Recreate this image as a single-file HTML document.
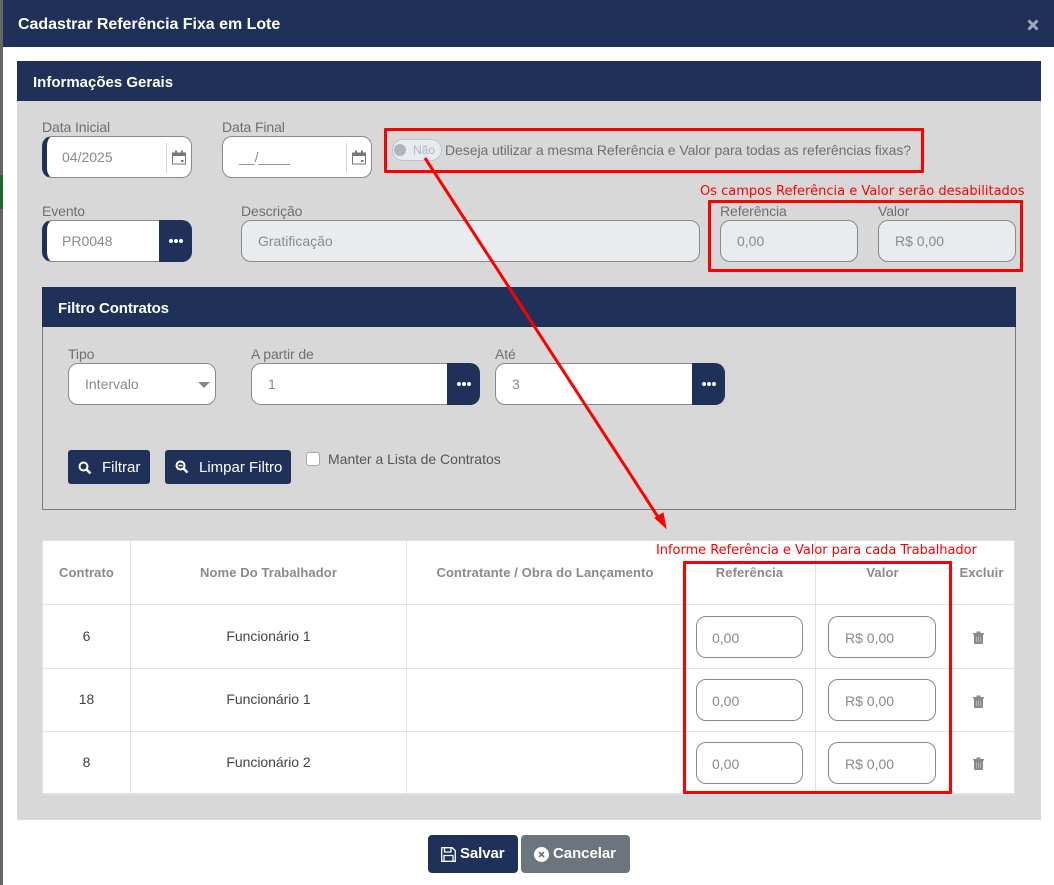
<!DOCTYPE html>
<html lang="pt-BR"><head><meta charset="utf-8"><title>Cadastrar Referência Fixa em Lote</title>
<style>
html,body{margin:0;padding:0;width:1054px;height:885px;overflow:hidden;background:#fff;font-family:"Liberation Sans",Arial,sans-serif}
.a{position:absolute;box-sizing:border-box;white-space:nowrap}
.lb{font-size:14px;line-height:16px;color:#6f6f6f;letter-spacing:-.1px}
.in{height:42px;border:1px solid #8a8a8a;border-radius:10px;background:#fff;font-size:14px;color:#8a8a8a;line-height:40px;padding-left:16px}
.ti{line-height:42px;padding-left:15px}
.dis{background:#e9ecef}
.lbar{border-left:5px solid #1f3158;padding-left:15px}
.dots{background:#1f3158;height:42px;border-radius:0 10px 10px 0}
.dots i{position:absolute;top:19px;width:4px;height:4px;border-radius:50%;background:#fff}
.bar{background:#1f3158;color:#fff;font-weight:bold}
.btn{background:#1f3158;color:#fff;border-radius:3px;font-size:14px}
.th{font-size:13px;font-weight:bold;color:#8a8a8a;text-align:center;line-height:16px;letter-spacing:.1px}
.td{font-size:14px;color:#444;text-align:center;line-height:16px;letter-spacing:-.05px}
.red{font-family:"DejaVu Sans",sans-serif;color:#f00;font-size:13px;line-height:14px}
.rb{border:3px solid #f00;border-radius:1px}
</style></head><body>
<!-- background behind modal -->
<div class="a" style="left:0;top:0;width:3px;height:885px;background:#666"></div>
<div class="a" style="left:0;top:175px;width:3px;height:34px;background:#1c6b2a"></div>

<!-- modal header -->
<div class="a bar" style="left:3px;top:0;width:1051px;height:47px"></div>
<div class="a" style="left:18px;top:15px;font-size:16px;font-weight:bold;line-height:20px;color:#fff;letter-spacing:-.03px">Cadastrar Referência Fixa em Lote</div>
<svg class="a" style="left:1027px;top:19px" width="12" height="12" viewBox="0 0 12 12"><path d="M1.5 1.5L10.5 10.5M10.5 1.5L1.5 10.5" stroke="#a2a8b4" stroke-width="3"/></svg>

<!-- main panel -->
<div class="a" style="left:17px;top:101px;width:1024px;height:719px;background:#d8d8d8"></div>
<div class="a bar" style="left:17px;top:61px;width:1024px;height:40px"></div>
<div class="a" style="left:33px;top:74px;font-size:15px;font-weight:bold;line-height:18px;color:#fff">Informações Gerais</div>

<!-- date fields -->
<div class="a lb" style="left:42px;top:119px">Data Inicial</div>
<div class="a in lbar" style="left:42px;top:136px;width:150px">04/2025</div>
<div class="a" style="left:166px;top:143px;width:1px;height:30px;background:#cfd3da"></div>
<svg class="a" style="left:172px;top:150px" width="14" height="15" viewBox="0 0 14 15"><path d="M.5 3h13v11H.5z" fill="#fff" stroke="#777"/><path d="M0 2.500h14V6H0z" fill="#777"/><path d="M3 .5h2v3H3zM9 .5h2v3H9z" fill="#777"/><path d="M9 10h2.500v2H9z" fill="#777"/></svg>

<div class="a lb" style="left:222px;top:119px">Data Final</div>
<div class="a in" style="left:222px;top:136px;width:150px;padding-left:16px">__/____</div>
<div class="a" style="left:346px;top:143px;width:1px;height:30px;background:#cfd3da"></div>
<svg class="a" style="left:352px;top:150px" width="14" height="15" viewBox="0 0 14 15"><path d="M.5 3h13v11H.5z" fill="#fff" stroke="#777"/><path d="M0 2.500h14V6H0z" fill="#777"/><path d="M3 .5h2v3H3zM9 .5h2v3H9z" fill="#777"/><path d="M9 10h2.500v2H9z" fill="#777"/></svg>

<!-- toggle -->
<div class="a" style="left:392px;top:139px;width:50px;height:22px;border:1px solid #bfc4cc;border-radius:11px;background:#e9ecef"></div>
<div class="a" style="left:394px;top:144px;width:12px;height:12px;border-radius:50%;background:#adb5bd"></div>
<div class="a" style="left:413px;top:142px;font-size:12px;line-height:16px;color:#adb5bd">Não</div>
<div class="a lb" style="left:445px;top:142px;letter-spacing:-.06px">Deseja utilizar a mesma Referência e Valor para todas as referências fixas?</div>

<!-- evento row -->
<div class="a lb" style="left:42px;top:203px">Evento</div>
<div class="a in lbar" style="left:42px;top:220px;width:118px;border-radius:10px 0 0 10px">PR0048</div>
<div class="a dots" style="left:159px;top:220px;width:33px"><i style="left:10px"></i><i style="left:15px"></i><i style="left:20px"></i></div>

<div class="a lb" style="left:241px;top:203px">Descrição</div>
<div class="a in dis" style="left:241px;top:220px;width:459px">Gratificação</div>

<div class="a lb" style="left:720px;top:203px">Referência</div>
<div class="a in dis" style="left:720px;top:220px;width:138px">0,00</div>
<div class="a lb" style="left:878px;top:203px">Valor</div>
<div class="a in dis" style="left:878px;top:220px;width:138px">R$ 0,00</div>

<!-- filter -->
<div class="a bar" style="left:42px;top:287px;width:974px;height:40px"></div>
<div class="a" style="left:58px;top:300px;font-size:15px;font-weight:bold;line-height:17px;color:#fff;letter-spacing:-.1px">Filtro Contratos</div>
<div class="a" style="left:42px;top:327px;width:974px;height:183px;border:1px solid #7c7c7c;border-top:0"></div>

<div class="a lb" style="left:68px;top:346px">Tipo</div>
<div class="a in" style="left:68px;top:363px;width:148px">Intervalo</div>
<div class="a" style="left:198px;top:382px;width:0;height:0;border-left:6px solid transparent;border-right:6px solid transparent;border-top:6px solid #888"></div>

<div class="a lb" style="left:251px;top:346px">A partir de</div>
<div class="a in" style="left:251px;top:363px;width:197px;border-radius:10px 0 0 10px">1</div>
<div class="a dots" style="left:447px;top:363px;width:33px"><i style="left:10px"></i><i style="left:15px"></i><i style="left:20px"></i></div>

<div class="a lb" style="left:495px;top:346px">Até</div>
<div class="a in" style="left:495px;top:363px;width:198px;border-radius:10px 0 0 10px">3</div>
<div class="a dots" style="left:692px;top:363px;width:33px"><i style="left:10px"></i><i style="left:15px"></i><i style="left:20px"></i></div>

<div class="a btn" style="left:68px;top:450px;width:82px;height:34px"></div>
<svg class="a" style="left:78px;top:461px" width="14" height="14" viewBox="0 0 14 14"><circle cx="5.500" cy="5.500" r="4" fill="none" stroke="#fff" stroke-width="2"/><path d="M8.500 8.500L12.500 12.500" stroke="#fff" stroke-width="2.500"/></svg>
<div class="a" style="left:102px;top:459px;font-size:15px;line-height:17px;color:#fff">Filtrar</div>
<div class="a btn" style="left:165px;top:450px;width:126px;height:34px"></div>
<svg class="a" style="left:175px;top:460px" width="14" height="14" viewBox="0 0 14 14"><circle cx="5.500" cy="5.500" r="4" fill="none" stroke="#fff" stroke-width="2"/><path d="M8.500 8.500L12.500 12.500" stroke="#fff" stroke-width="2.500"/><path d="M3.500 5.500h4" stroke="#fff" stroke-width="1.500"/></svg>
<div class="a" style="left:199px;top:459px;font-size:15px;line-height:17px;color:#fff">Limpar Filtro</div>
<div class="a" style="left:306px;top:452px;width:14px;height:14px;background:#fff;border:1px solid #aaa;border-radius:3px"></div>
<div class="a" style="left:328px;top:451px;font-size:14px;line-height:16px;color:#555">Manter a Lista de Contratos</div>

<!-- table -->
<div class="a" style="left:42px;top:540px;width:973px;height:255px;background:#fff;border:1px solid #dee2e6;border-width:1px 1px 2px 1px"></div>
<div class="a" style="left:43px;top:604px;width:971px;height:1px;background:#dee2e6"></div>
<div class="a" style="left:43px;top:668px;width:971px;height:1px;background:#dee2e6"></div>
<div class="a" style="left:43px;top:731px;width:971px;height:1px;background:#dee2e6"></div>
<div class="a" style="left:130px;top:541px;width:1px;height:253px;background:#dee2e6"></div>
<div class="a" style="left:406px;top:541px;width:1px;height:253px;background:#dee2e6"></div>
<div class="a" style="left:815px;top:541px;width:1px;height:253px;background:#dee2e6"></div>

<div class="a th" style="left:43px;top:565px;width:87px">Contrato</div>
<div class="a th" style="left:131px;top:565px;width:275px">Nome Do Trabalhador</div>
<div class="a th" style="left:407px;top:565px;width:276px">Contratante / Obra do Lançamento</div>
<div class="a th" style="left:684px;top:565px;width:131px">Referência</div>
<div class="a th" style="left:816px;top:565px;width:133px">Valor</div>
<div class="a th" style="left:950px;top:565px;width:63px">Excluir</div>

<div class="a td" style="left:43px;top:628px;width:87px">6</div>
<div class="a td" style="left:131px;top:628px;width:275px">Funcionário 1</div>
<div class="a td" style="left:43px;top:691px;width:87px">18</div>
<div class="a td" style="left:131px;top:691px;width:275px">Funcionário 1</div>
<div class="a td" style="left:43px;top:754px;width:87px">8</div>
<div class="a td" style="left:131px;top:754px;width:275px">Funcionário 2</div>

<div class="a in ti" style="left:696px;top:616px;width:107px">0,00</div>
<div class="a in ti" style="left:828px;top:616px;width:108px;padding-left:16px">R$ 0,00</div>
<div class="a in ti" style="left:696px;top:679px;width:107px">0,00</div>
<div class="a in ti" style="left:828px;top:679px;width:108px;padding-left:16px">R$ 0,00</div>
<div class="a in ti" style="left:696px;top:742px;width:107px">0,00</div>
<div class="a in ti" style="left:828px;top:742px;width:108px;padding-left:16px">R$ 0,00</div>

<svg class="a" style="left:973px;top:631px" width="11" height="13" viewBox="0 0 11 13"><path d="M0 2h11v1.500H0zM3.500 .5h4V2h-4z" fill="#8a8a8a"/><path d="M1 3h9v9a1 1 0 0 1-1 1H2a1 1 0 0 1-1-1z" fill="#8a8a8a"/><path d="M3.500 5.500v5.500M5.500 5.500v5.500M7.500 5.500v5.500" stroke="#c4c4c4" stroke-width=".7"/></svg>
<svg class="a" style="left:973px;top:695px" width="11" height="13" viewBox="0 0 11 13"><path d="M0 2h11v1.500H0zM3.500 .5h4V2h-4z" fill="#8a8a8a"/><path d="M1 3h9v9a1 1 0 0 1-1 1H2a1 1 0 0 1-1-1z" fill="#8a8a8a"/><path d="M3.500 5.500v5.500M5.500 5.500v5.500M7.500 5.500v5.500" stroke="#c4c4c4" stroke-width=".7"/></svg>
<svg class="a" style="left:973px;top:757px" width="11" height="13" viewBox="0 0 11 13"><path d="M0 2h11v1.500H0zM3.500 .5h4V2h-4z" fill="#8a8a8a"/><path d="M1 3h9v9a1 1 0 0 1-1 1H2a1 1 0 0 1-1-1z" fill="#8a8a8a"/><path d="M3.500 5.500v5.500M5.500 5.500v5.500M7.500 5.500v5.500" stroke="#c4c4c4" stroke-width=".7"/></svg>

<!-- footer buttons -->
<div class="a" style="left:428px;top:835px;width:90px;height:38px;background:#1f3158;border-radius:4px"></div>
<svg class="a" style="left:441px;top:847px" width="15" height="15" viewBox="0 0 15 15"><path d="M.7.7h10.500l3.100 3.100v10.500H.7z" fill="none" stroke="#fff" stroke-width="1.300"/><path d="M3.500 1v4h6.500V1M3 14V8.500h9V14" fill="none" stroke="#fff" stroke-width="1.300"/></svg>
<div class="a" style="left:460px;top:845px;font-size:15px;font-weight:bold;line-height:18px;color:#fff;letter-spacing:-.1px">Salvar</div>
<div class="a" style="left:521px;top:835px;width:109px;height:38px;background:#6c757d;border-radius:4px"></div>
<svg class="a" style="left:534px;top:847px" width="15" height="15" viewBox="0 0 15 15"><circle cx="7.500" cy="7.500" r="7.500" fill="#fff"/><path d="M5 5l5 5M10 5l-5 5" stroke="#6c757d" stroke-width="1.600"/></svg>
<div class="a" style="left:553px;top:845px;font-size:15px;font-weight:bold;line-height:18px;color:#fff;letter-spacing:-.05px">Cancelar</div>

<!-- annotations -->
<div class="a rb" style="left:384px;top:128px;width:540px;height:45px"></div>
<div class="a red" style="left:700px;top:185px">Os campos Referência e Valor serão desabilitados</div>
<div class="a rb" style="left:708px;top:200px;width:315px;height:72px"></div>
<div class="a red" style="left:656px;top:544px;letter-spacing:-.04px">Informe Referência e Valor para cada Trabalhador</div>
<div class="a rb" style="left:683px;top:561px;width:269px;height:233px"></div>
<svg class="a" style="left:0;top:0" width="1054" height="885" viewBox="0 0 1054 885"><path d="M425 158L660 520" stroke="#f00" stroke-width="3" fill="none"/><path d="M666 528L655 518 663 513z" fill="#f00" stroke="#f00"/></svg>
</body></html>
